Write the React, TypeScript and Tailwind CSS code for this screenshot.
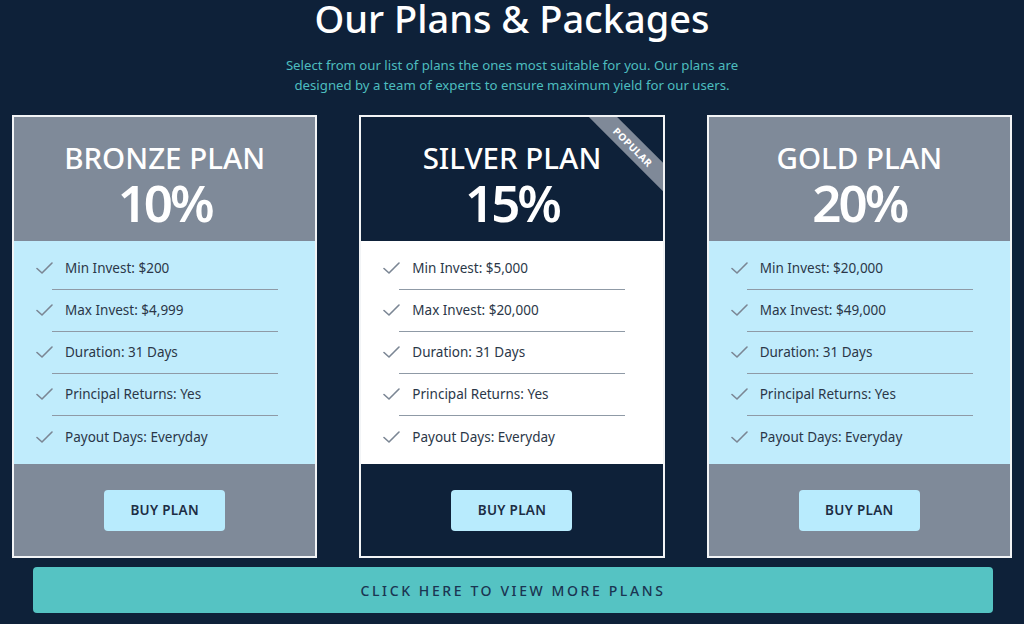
import React from "react";

type Plan = {
  name: string;
  rate: string;
  min: string;
  max: string;
  featured?: boolean;
};

const plans: Plan[] = [
  { name: "BRONZE PLAN", rate: "10%", min: "$200", max: "$4,999" },
  { name: "SILVER PLAN", rate: "15%", min: "$5,000", max: "$20,000", featured: true },
  { name: "GOLD PLAN", rate: "20%", min: "$20,000", max: "$49,000" },
];

function Check() {
  return (
    <svg width="17" height="13" viewBox="0 0 17 13" fill="none" className="shrink-0">
      <path d="M1 6.5 L6 11 L16 1" stroke="#7b8694" strokeWidth="1.6" strokeLinecap="round" strokeLinejoin="round" />
    </svg>
  );
}

function PlanCard({ plan }: { plan: Plan }) {
  const features = [
    `Min Invest: ${plan.min}`,
    `Max Invest: ${plan.max}`,
    "Duration: 31 Days",
    "Principal Returns: Yes",
    "Payout Days: Everyday",
  ];
  const dark = plan.featured;
  return (
    <div className="relative w-[306px] border-2 border-[#f2f4f6] overflow-hidden flex flex-col">
      {dark && (
        <div className="absolute top-[20px] right-[-30px] w-[120px] h-[20px] rotate-45 bg-[#7f8998] text-white text-[10px] font-bold tracking-[0.5px] flex items-center justify-center">
          POPULAR
        </div>
      )}
      <div
        className={`h-[124px] flex flex-col items-center text-white ${dark ? "bg-[#0e2139]" : "bg-[#7f8a99]"}`}
      >
        <div className="mt-[23px] text-[29.5px] leading-[36px] font-medium">{plan.name}</div>
        <div className="text-[51px] leading-[52px] font-semibold tracking-[-3px]">{plan.rate}</div>
      </div>
      <ul className={`pt-[7px] pb-[6px] ${dark ? "bg-white" : "bg-[#c0ecfc]"}`}>
        {features.map((f, i) => (
          <li key={f} className="h-[42px] flex flex-col">
            <div className="flex-1 flex items-center pl-[22px] gap-[12px] text-[13.5px] text-[#2b3748]">
              <Check />
              <span>{f}</span>
            </div>
            {i < features.length - 1 && <div className="ml-[38px] w-[226px] h-px bg-[#8f9aa6]" />}
          </li>
        ))}
      </ul>
      <div className={`h-[92px] flex items-center justify-center ${dark ? "bg-[#0e2139]" : "bg-[#7f8a99]"}`}>
        <button className="w-[121px] h-[41px] rounded-[4px] bg-[#b8ebfd] text-[#1c2d44] text-[13.5px] font-semibold tracking-[0.3px]">
          BUY PLAN
        </button>
      </div>
    </div>
  );
}

export default function App() {
  return (
    <div
      className="w-[1024px] h-[624px] overflow-hidden bg-[#0e2139] flex flex-col items-center"
      style={{ fontFamily: '"Noto Sans", "Open Sans", sans-serif' }}
    >
      <h1 className="mt-[-5px] text-[38px] leading-[46px] font-medium text-white">Our Plans &amp; Packages</h1>
      <p className="mt-[14px] w-[480px] text-center text-[13.2px] leading-[20px] text-[#4dbdbf]">
        Select from our list of plans the ones most suitable for you. Our plans are designed by a team of experts to
        ensure maximum yield for our users.
      </p>
      <div className="mt-[20px] flex gap-[42px] w-full px-[12px]">
        {plans.map((p) => (
          <PlanCard key={p.name} plan={p} />
        ))}
      </div>
      <button className="mt-[9px] w-[960px] h-[46px] ml-[2px] rounded-[4px] bg-[#55c3c3] text-[#1b3552] text-[14px] tracking-[2.6px] font-medium">
        CLICK HERE TO VIEW MORE PLANS
      </button>
    </div>
  );
}
